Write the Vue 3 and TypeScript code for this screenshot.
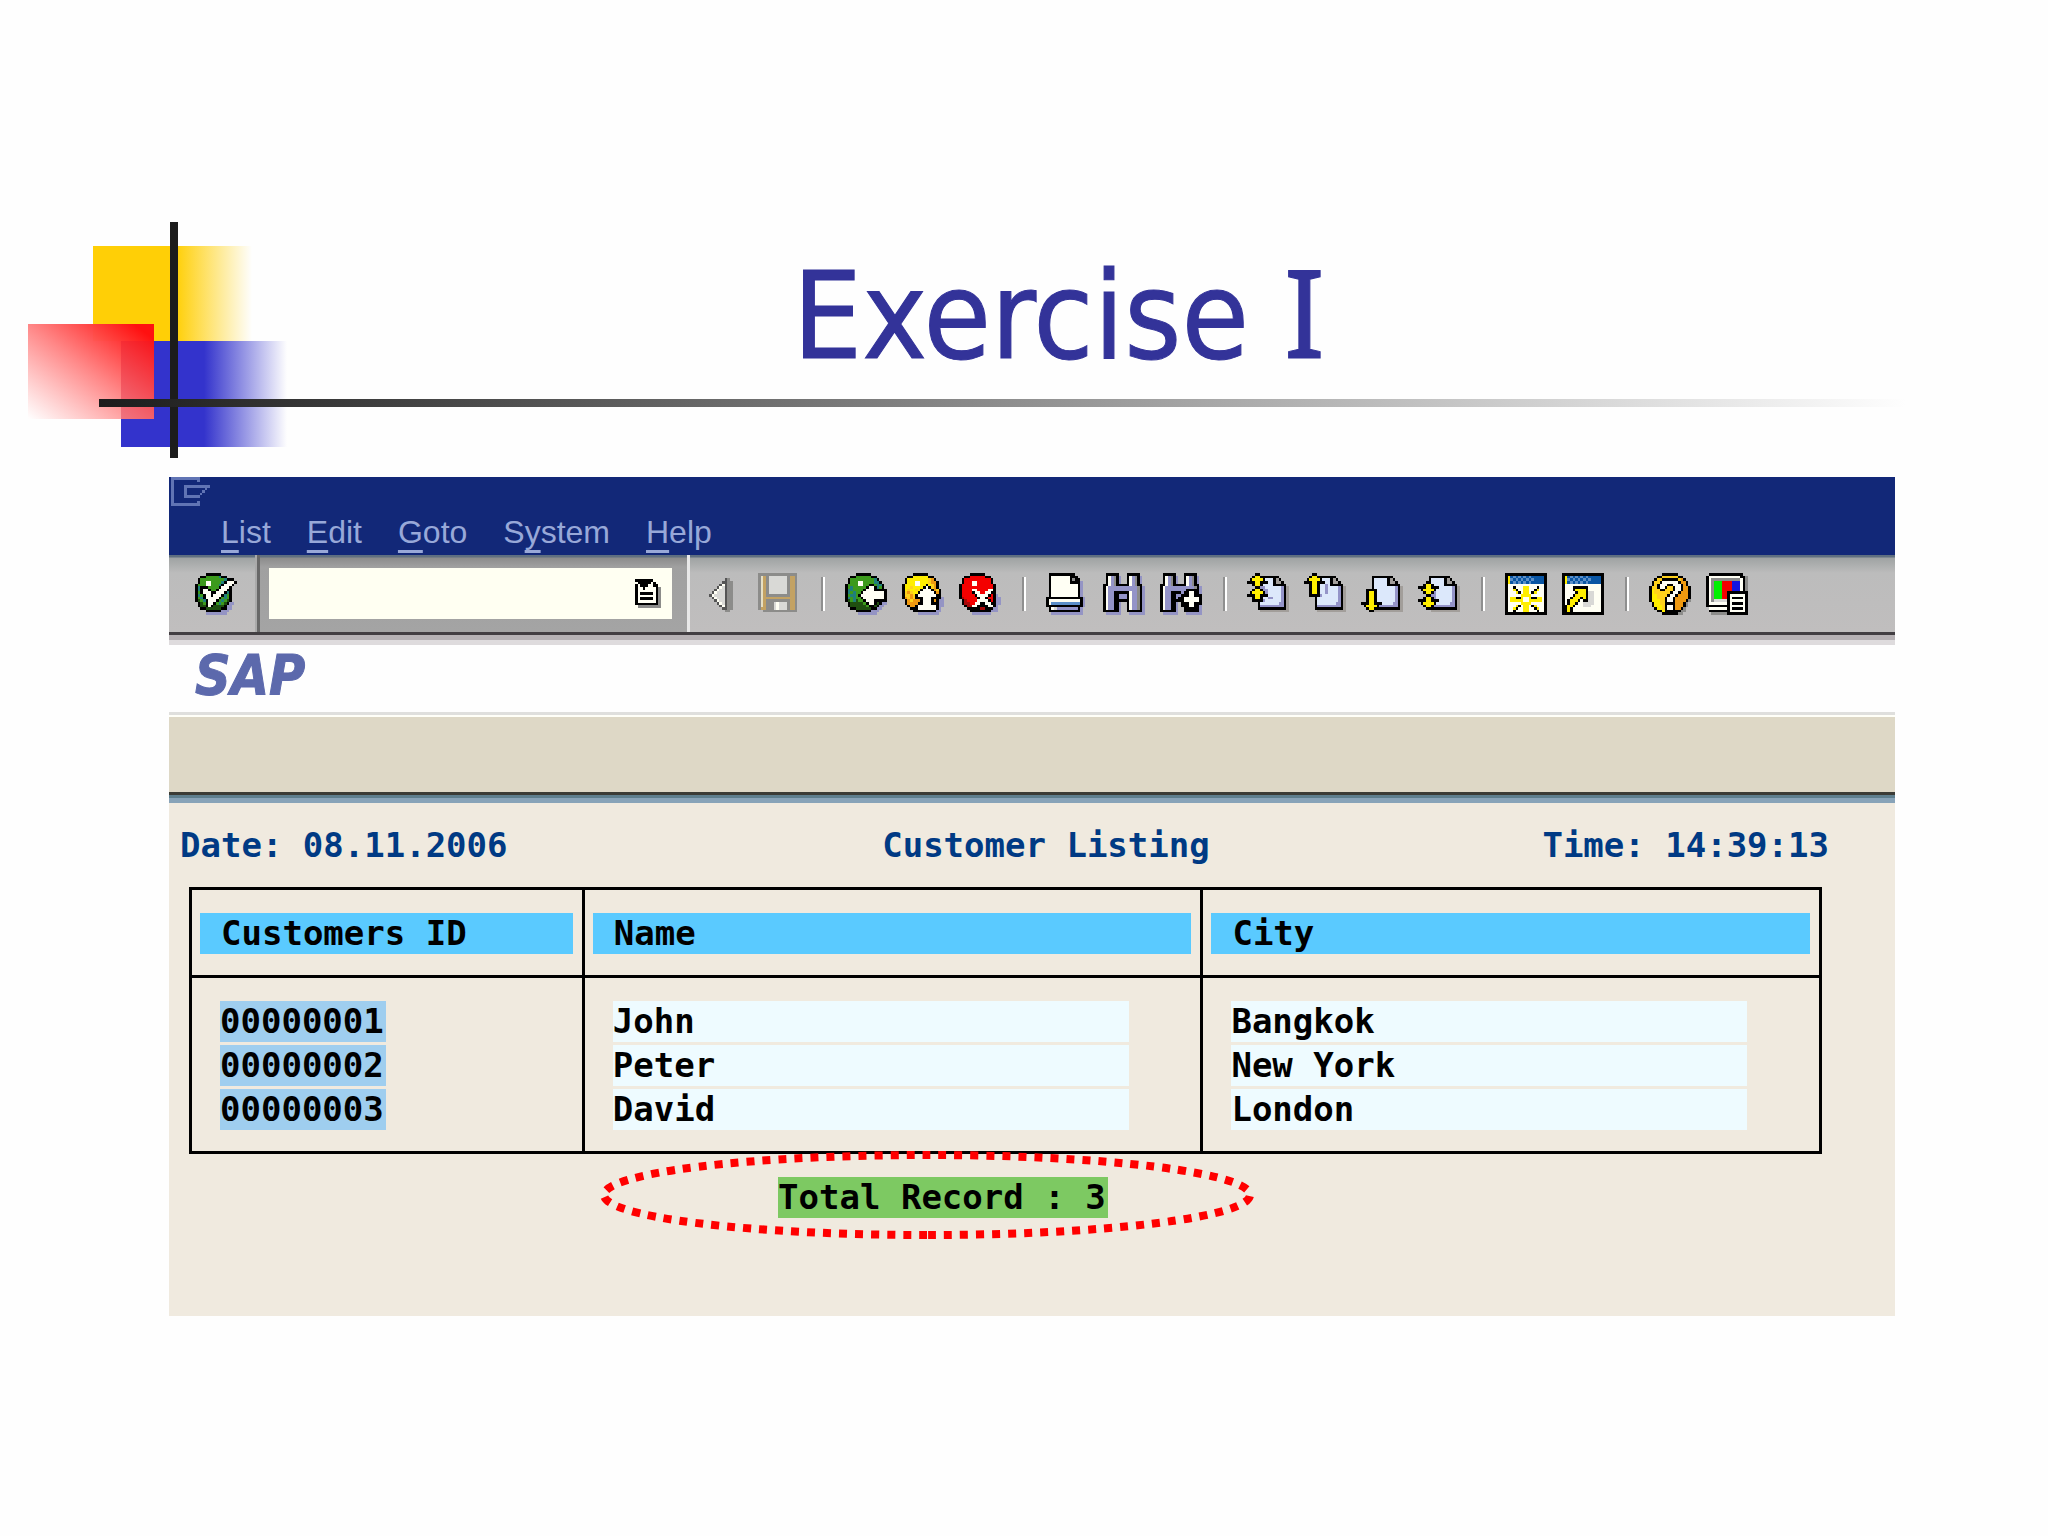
<script setup lang="ts">
interface Customer {
  id: string
  name: string
  city: string
}

interface Menu {
  before: string
  key: string
  after: string
}

interface Run {
  x: number
  y: number
  w: number
  fill: string
}

interface Sprite {
  width: number
  height: number
  runs: Run[]
}

interface Tool {
  label: string
  sprite: Sprite
}

const menus: Menu[] = [
  { before: '', key: 'L', after: 'ist' },
  { before: '', key: 'E', after: 'dit' },
  { before: '', key: 'G', after: 'oto' },
  { before: 'S', key: 'y', after: 'stem' },
  { before: '', key: 'H', after: 'elp' },
]

const customers: Customer[] = [
  { id: '00000001', name: 'John', city: 'Bangkok' },
  { id: '00000002', name: 'Peter', city: 'New York' },
  { id: '00000003', name: 'David', city: 'London' },
]

// One letter per colour; a dot is a transparent cell.
const palette: Record<string, string> = {
  k: '#000000',
  n: '#555555',
  w: '#fffff4',
  e: '#d9d9d6',
  a: '#8c8c8a',
  x: '#a29e9a',
  s: '#9494c4',
  v: '#9494c8',
  l: '#dce8fb',
  g: '#3c9a1c',
  t: '#1f7f7a',
  d: '#1f4f10',
  y: '#ffee00',
  Y: '#ffd21c',
  o: '#f09a10',
  r: '#f40000',
  R: '#a80808',
  G: '#00f000',
  b: '#0a56a4',
  B: '#5c8fc8',
  u: '#1414e0',
  c: '#e6dfc4',
  T: '#c3a263',
  p: '#6074b4',
}

// Turns rows of letters into horizontal colour runs.
function sprite(rows: string[]): Sprite {
  const runs: Run[] = []
  rows.forEach((row, y) => {
    let x = 0
    while (x < row.length) {
      const letter = row[x]
      let end = x + 1
      while (end < row.length && row[end] === letter) end++
      if (letter !== '.') runs.push({ x, y, w: end - x, fill: palette[letter] })
      x = end
    }
  })
  return { width: Math.max(...rows.map((r) => r.length)), height: rows.length, runs }
}

// Lays one set of rows over another, starting at the given row.
function overlay(base: string[], top: string[], from: number): string[] {
  return base.map((row, y) => {
    const over = top[y - from]
    if (!over) return row
    return [...row].map((c, x) => (over[x] && over[x] !== '.' ? over[x] : c)).join('')
  })
}

const enter = sprite([
  '....kkkkkk......',
  '..kkgggggtkk....',
  '.kgggggggggtkkk.',
  '.kggwwggggtkwwwk',
  'kgggwwgggtkwwwk.',
  'ktkkkggggkwwwk..',
  'ktkwwkggkwwwkk..',
  'kgkwwwkkwwwktk..',
  'ktgkwwkwwwktgk..',
  'kgtkwwwwwkgtgk..',
  'kdgtkwwwkgtgdk..',
  '.kdgkwwkgtgdkss.',
  '.kddkwkddddkss..',
  '..kkddddddkkss..',
  '....kkkkkksss...',
  '....ssssssss....',
])

const history = sprite([
  'kkkkkkk...',
  '.kkkkkwk..',
  'kwkkkwwkk.',
  'kwwkwwwwka',
  'kwwwwwwwka',
  'kwkkkkkwka',
  'kwwwwwwwka',
  'kwkkkkkwka',
  'kwwwwwwwka',
  'kkkkkkkkka',
  '.aaaaaaaaa',
])

const windowMark = sprite([
  'ppppppppppp....',
  'p.........p....',
  'p..............',
  'p....pppppppppp',
  'p....p.......p.',
  'p....p......p..',
  'p....p.....p...',
  'p....pppppp....',
  'p..............',
  'p.........p....',
  'ppppppppppp....',
])

const collapse = sprite([
  '................',
  '................',
  '.........na.....',
  '........nnaa....',
  '.......nwnaa....',
  '......nwenaa....',
  '.....nweenaa....',
  '....nweeenaa....',
  '...nweeeenaa....',
  '....nweeenaa....',
  '.....nweenaa....',
  '......nwenaa....',
  '.......nwnaa....',
  '........nnaa....',
  '.........aa.....',
  '................',
])

const save = sprite([
  'aaaaaaaaaaaaaaa.',
  'acTaeeeeeeeaTTa.',
  'acTaeeeeeeeaTTa.',
  'acTaeeeeeeeaTTa.',
  'acTaeeeeeeeaTTa.',
  'acTaeeeeeeeaTTa.',
  'acTaeeeeeeeaTTa.',
  'acTaeeeeeeeaTTa.',
  'acTaaaaaaaaaTTa.',
  'acTTTTTTTTTTTTa.',
  'acTaaaaaaaaaTTa.',
  'acTaaaeweeeaTTa.',
  'acTaaaeweeeaTTa.',
  'aTTaaaeweeeaTTa.',
  '..aaaaaaaaaaaaa.',
  '................',
])

const back = sprite([
  '....kkkkkk......',
  '..kkggggggkk....',
  '.kgggggggggtk...',
  '.kgggwwggggttk..',
  'kggggwwggkkgttk.',
  'kgtgggggkwwktgk.',
  'kttggggkwwwkkkkk',
  'ktgtggkwwwwwwwwk',
  'kgttgkwwwwwwwwwk',
  'ktgtggkwwwwwwwwk',
  'kdgtdggkwwwkkkkk',
  '.kdddddgkwwkdkss',
  '.kddddddgkkdkss.',
  '..kkddddddkkss..',
  '....kkkkkksss...',
  '.....sssssss....',
])

const exit = sprite([
  '....kkkkkk......',
  '..kkyyyyyykk....',
  '.kyyyyyyyyYok...',
  '.kyyywwyyyYook..',
  'kyyyywwyykyYok..',
  'kyyYyyyykwkYok..',
  'kyYyyYykwwwkoYk.',
  'kYoYyykwwwwwkok.',
  'kYYoYkwwwwwwwkk.',
  'koYoYkkkwwwkkkks',
  '.koYoookwwwkokss',
  '.kooookkwwwkkkss',
  '..kookwwwwwwwkss',
  '...kkkwwwwwwwks.',
  '....kkkkkkkkkss.',
  '......ssssssss..',
])

const cancel = sprite([
  '....kkkkkk......',
  '..kkrrrrrrkk....',
  '.krrrrrrrrrrk...',
  '.krrrwwrrrrrk...',
  'krrrrwwrrrrrrk..',
  'krrrrrrrrrrrrk..',
  'krrrrwwrrrrwwk..',
  'krrrrkwwrrwwkk..',
  'krrrrrkwwwwkrks.',
  'kRrrrrrkwwkrrkss',
  '.kRrrrrwwwwkrkss',
  '.kRRrrwwkkwwkkss',
  '..kRRwwkkkkwwks.',
  '...kkkkkRRkkkss.',
  '....kkkkkkkksss.',
  '.....sssssss....',
])

const print = sprite([
  '.kkkkkkkkkk.....',
  '.kwwwwwwwkkk....',
  '.kwwwwwwwkakk...',
  '.kwwwwwwwkkkks..',
  '.kwwwwwwwwwwks..',
  '.kwwwwwwwwwwks..',
  '.kwwwwwwwwwwks..',
  '.kwwwwwwwwwwks..',
  '.kwwwwwwwwwwks..',
  'kkkkkkkkkkkkkks.',
  'kwwwwwwwwwwwwks.',
  'kwBBBBBBBBBBBks.',
  'kkkkkkkkkkkkkks.',
  '.kwevvvvvvvvks..',
  '.kkkkkkkkkkkks..',
  '..ssssssssssss..',
])

const find = sprite([
  '.kkkkk...kkkkk..',
  '.kwvaks..kwvaks.',
  '.kwvaks..kwvaks.',
  '.kwvaks..kwvaks.',
  'kkwvakkkkkwvakk.',
  'kwvvvvvvvvvvvaks',
  'kwvvvvvvvvvvvaks',
  'kwvvkkkkkkwvvaks',
  'kwvvkkvvvkwvvaks',
  'kwvvkkvvvkwvvaks',
  'kwvvkkkkkkwvvaks',
  'kwvvkks..kwvvaks',
  'kwvvkks..kwvvaks',
  'kwvvkks..kwvvaks',
  'kkkkkks..kkkkkks',
  '.ssssss...ssssss',
])

const findNext = sprite([
  '.kkkkk...kkkkk..',
  '.kwvaks..kwvaks.',
  '.kwvaks..kwvaks.',
  '.kwvaks..kwvaks.',
  'kkwvakkkkkwvakk.',
  'kwvvvvvvvvvvvaks',
  'kwvvvvvvvvkkkkks',
  'kwvvkkkkvkkwwkks',
  'kwvvkkvvkkkwwkkk',
  'kwvvkkvkkwwwwwwk',
  'kwvvkkkkkwwwwwwk',
  'kwvvkks.kkkwwkkk',
  'kwvvkks.kkkwwkks',
  'kwvvkks..kkkkkks',
  'kkkkkks..kkkkkks',
  '.ssssss...ssssss',
])

const sheet = [
  '................',
  '....kkkkkkkk....',
  '....klllllkxk...',
  '....klllllkxxk..',
  '....klllllkkkkk.',
  '....kllllllllvkx',
  '....kllllllllvkx',
  '....kllllllllvkx',
  '....kllllllllvkx',
  '....kllllllllvkx',
  '....kllllllllvkx',
  '....klllllllvvkx',
  '....kvvvvvvvvvkx',
  '....kkkkkkkkkkkx',
  '.....xxxxxxxxxxx',
  '................',
]

const upHead = ['...kk...', '..kyyk..', '.kyyyyk.', 'kkkyykkk']
const downHead = ['kkkyykkk', '.kyyyyk.', '..kyyk..', '...kk...']
const shaft = '..kyyk..'

const firstPage = sprite(overlay(sheet, [...upHead, shaft, '...kkvv.', '..kyykvv', '.kyyyykv', 'kkkyykkk', shaft + 'vv', '..kkkkv.'], 0))
const previousPage = sprite(overlay(sheet, [...upHead, shaft + 'v', shaft + 'v', shaft + 'v', shaft + 'v', '..kkkkv.'], 0))
const nextPage = sprite(overlay(sheet, ['..kkkk..', shaft, shaft, shaft, shaft, ...downHead], 6))
const lastPage = sprite(overlay(sheet, ['...kk...', shaft, ...downHead.slice(0, 2), '..kyykv.', '...kkvv.', '..kyykv.', ...downHead], 3))

const newSession = sprite([
  'kkkkkkkkkkkkkkkk',
  'kybBbBbBbBbbbbbk',
  'kyBbBbBbBbBbbbbk',
  'kybBbBbBbBbbbbbk',
  'kwwwwwwwwwwwwwwk',
  'kwwkwwwyywwwkwwk',
  'kwwykwwyywwkywwk',
  'kwwwykwyywkywwwk',
  'kwwwwwyyyywwwwwk',
  'kwyykkywwykkyywk',
  'kwyyyyywwyyyyywk',
  'kwwwwwyyyywwwwwk',
  'kwwwykwyywkywwwk',
  'kwwykwwyywwkywwk',
  'kwwkwwwyywwwkwwk',
  'kkkkkkkkkkkkkkkk',
])

const shortcut = sprite([
  'kkkkkkkkkkkkkkkk',
  'kybBbBbBbBbbbbbk',
  'kyBbBbBbBbBbbbbk',
  'kybBbBbBbBbbbbbk',
  'kwwwwwwwwwwwwwwk',
  'kwwwkkkkkkwwwwwk',
  'kwwwkyyyykwwwwwk',
  'kwwwwkyyykeewwwk',
  'kwwwkyyyykeewwwk',
  'kwwkyyykykeewwwk',
  'kwkyyykwkkeewwwk',
  'kwkyykwweeeewwwk',
  'kkyykwwweeewwwwk',
  'kkykwwwwwwwwwwwk',
  'kkykwwwwwwwwwwwk',
  'kkkkkkkkkkkkkkkk',
])

const help = sprite([
  '.....kkkkkk.....',
  '...kkYYYYYYkk...',
  '..kYYkkkkkkYok..',
  '.kYYkwwwwwwkook.',
  '.kYkwwwkkwwwkok.',
  'kYYkwwkYYkwwkook',
  'kyYYkkYYYkwwkook',
  'kyYYYYYYkwwkoook',
  'kyyYYYYkwwkooook',
  'kyyYYYkwwkoooook',
  'kyyyYYkwwkooooka',
  '.kyyYYkkkkoooka.',
  '.kyyyYkwwkoooka.',
  '..kyyYkwwkooka..',
  '...kkykkkkkkaa..',
  '.....kkkkkkaa...',
])

const customize = sprite([
  '.kkkkkkkkkkkkk..',
  'kwwwwwwwwwwwwkka',
  'kwaaaaaaaaaaawka',
  'kwaGGGrrrruuuwka',
  'kwaGGGrrrruuuwka',
  'kwaGGGrrrruuuwka',
  'kwaGGGrrrruuuwka',
  'kwaGGGrrkkkkkkkk',
  'kwaGGGrrkwwwwwwk',
  'kwaGGGrrkwkkkkwk',
  'kwaeeeeekwwwwwwk',
  'kwwwwwwwkwkkkkwk',
  'kkkkkkkkkwwwwwwk',
  '.wwwwwwwkwkkkkwk',
  '.kkkkkkkkwwwwwwk',
  '..aaaaaakkkkkkkk',
])

const toolGroups: Tool[][] = [
  [
    { label: 'Collapse', sprite: collapse },
    { label: 'Save', sprite: save },
  ],
  [
    { label: 'Back', sprite: back },
    { label: 'Exit', sprite: exit },
    { label: 'Cancel', sprite: cancel },
  ],
  [
    { label: 'Print', sprite: print },
    { label: 'Find', sprite: find },
    { label: 'Find next', sprite: findNext },
  ],
  [
    { label: 'First page', sprite: firstPage },
    { label: 'Previous page', sprite: previousPage },
    { label: 'Next page', sprite: nextPage },
    { label: 'Last page', sprite: lastPage },
  ],
  [
    { label: 'New session', sprite: newSession },
    { label: 'Create shortcut', sprite: shortcut },
  ],
  [
    { label: 'Help', sprite: help },
    { label: 'Customize layout', sprite: customize },
  ],
]
</script>

<template>
  <main class="slide">
    <header class="slide-header">
      <svg class="ornament" viewBox="0 0 264 236" aria-hidden="true">
        <defs>
          <linearGradient id="fade-yellow">
            <stop offset="0.52" stop-color="#ffcf06" />
            <stop offset="1" stop-color="#ffcf06" stop-opacity="0" />
          </linearGradient>
          <linearGradient id="fade-blue">
            <stop offset="0.5" stop-color="#3333cc" />
            <stop offset="1" stop-color="#3333cc" stop-opacity="0" />
          </linearGradient>
          <linearGradient id="fade-red" x1="1" y1="0" x2="0" y2="1">
            <stop offset="0.08" stop-color="#ff1010" />
            <stop offset="0.5" stop-color="#ff8282" stop-opacity="0.96" />
            <stop offset="1" stop-color="#ffffff" stop-opacity="0.9" />
          </linearGradient>
        </defs>
        <rect x="65" y="24" width="159" height="95" fill="url(#fade-yellow)" />
        <rect x="93" y="119" width="166" height="106" fill="url(#fade-blue)" />
        <rect x="0" y="102" width="126" height="95" fill="url(#fade-red)" />
        <rect x="93" y="119" width="33" height="78" fill="#e81c30" fill-opacity="0.3" />
        <rect x="142" y="0" width="8" height="236" fill="#1c1c1c" />
      </svg>
      <h1 class="slide-title">Exercise <span class="numeral">I</span></h1>
      <div class="rule"></div>
    </header>

    <section class="window">
      <div class="title-bar">
        <svg class="window-mark" viewBox="0 0 15 11" shape-rendering="crispEdges" aria-hidden="true">
          <rect v-for="(r, i) in windowMark.runs" :key="i" :x="r.x" :y="r.y" :width="r.w" height="1" :fill="r.fill" />
        </svg>
        <nav class="menu-bar">
          <button v-for="m in menus" :key="m.key" type="button" class="menu">{{ m.before }}<span class="access-key">{{ m.key }}</span>{{ m.after }}</button>
        </nav>
      </div>

      <div class="toolbar">
        <div class="enter-cell">
          <button type="button" class="tool" aria-label="Enter">
            <svg class="tool-icon" viewBox="0 0 16 16" shape-rendering="crispEdges">
              <rect v-for="(r, i) in enter.runs" :key="i" :x="r.x" :y="r.y" :width="r.w" height="1" :fill="r.fill" />
            </svg>
          </button>
        </div>
        <div class="command-cell">
          <div class="command-field">
            <input class="command-input" type="text" aria-label="Command" />
            <button type="button" class="history" aria-label="Command history">
              <svg class="history-icon" viewBox="0 0 10 11" shape-rendering="crispEdges">
                <rect v-for="(r, i) in history.runs" :key="i" :x="r.x" :y="r.y" :width="r.w" height="1" :fill="r.fill" />
              </svg>
            </button>
          </div>
        </div>
        <div class="tools">
          <template v-for="(group, g) in toolGroups" :key="g">
            <span v-if="g > 0" class="separator"></span>
            <button v-for="tool in group" :key="tool.label" type="button" class="tool" :aria-label="tool.label">
              <svg class="tool-icon" viewBox="0 0 16 16" shape-rendering="crispEdges">
                <rect v-for="(r, i) in tool.sprite.runs" :key="i" :x="r.x" :y="r.y" :width="r.w" height="1" :fill="r.fill" />
              </svg>
            </button>
          </template>
        </div>
      </div>
      <div class="toolbar-shadow"></div>

      <div class="brand">SAP</div>
      <div class="application-bar"></div>

      <div class="report">
        <div class="report-heading">
          <span>Date: 08.11.2006</span>
          <h2 class="report-title">Customer Listing</h2>
          <span>Time: 14:39:13</span>
        </div>

        <table class="listing">
          <colgroup>
            <col class="col-id" />
            <col />
            <col />
          </colgroup>
          <thead>
            <tr>
              <th scope="col"><div class="head-bar">Customers ID</div></th>
              <th scope="col"><div class="head-bar">Name</div></th>
              <th scope="col"><div class="head-bar">City</div></th>
            </tr>
          </thead>
          <tbody>
            <tr v-for="c in customers" :key="c.id">
              <td><div class="value key-value">{{ c.id }}</div></td>
              <td><div class="value">{{ c.name }}</div></td>
              <td><div class="value">{{ c.city }}</div></td>
            </tr>
          </tbody>
        </table>

        <div class="summary">
          <div class="total">
            Total Record : 3
            <svg class="callout" viewBox="0 0 654 88" aria-hidden="true">
              <path
                d="M327 84 A323 40 0 0 1 327 4 A323 40 0 0 1 327 84"
                fill="none"
                stroke="#ff0000"
                stroke-width="8"
                stroke-dasharray="8 8"
              />
            </svg>
          </div>
        </div>
      </div>
    </section>
  </main>
</template>

<style>
body {
  margin: 0;
  background: #fefefe;
}
</style>

<style scoped>
.slide {
  padding-bottom: 80px;
}

.slide-header {
  position: relative;
  padding-top: 241px;
}

.ornament {
  position: absolute;
  left: 28px;
  top: 222px;
  width: 264px;
  height: 236px;
}

.slide-title {
  margin: 0;
  padding-left: 70px;
  color: #333399;
  font: 400 122px/150px 'DejaVu Sans Condensed', 'DejaVu Sans', sans-serif;
  text-align: center;
  -webkit-text-stroke: 1px #333399;
}

.numeral {
  font-family: 'Noto Sans', sans-serif;
  line-height: 1;
}

.rule {
  position: relative;
  height: 8px;
  margin: 8px 142px 0 99px;
  background: linear-gradient(to right, #1c1c1c, #fefefe);
}

.window {
  margin: 70px 153px 0 169px;
  background: #f0eadf;
}

.title-bar {
  height: 78px;
  background: #122878;
}

.window-mark {
  display: block;
  width: 39px;
  height: 29px;
  margin-left: 2px;
}

.menu-bar {
  display: flex;
  gap: 36px;
  padding: 3px 0 0 52px;
}

.menu {
  padding: 0;
  border: 0;
  background: none;
  color: #98a8d8;
  font: 32px/46px 'Liberation Sans', Arial, sans-serif;
}

.access-key {
  text-decoration: underline;
  text-decoration-thickness: 3px;
  text-decoration-skip-ink: none;
  text-underline-offset: 7px;
}

.toolbar {
  display: flex;
  height: 77px;
  border-bottom: 3px solid #423e42;
  background: linear-gradient(to bottom, #5f6f80 0, #5f6f80 2px, #9fa3a3 3px, #bcbcbc 18px, #c0bebe 100%);
}

.enter-cell {
  display: flex;
  align-items: center;
  width: 88px;
  padding-left: 26px;
  box-sizing: border-box;
  border-right: 2px solid #aaaaaa;
}

.command-cell {
  display: flex;
  align-items: center;
  padding: 0 15px 0 9px;
  border-left: 3px solid #686868;
  border-right: 3px solid #e8e8e8;
  background: linear-gradient(to bottom, #5f6f80 0, #5f6f80 2px, #8c8c8c 3px, #a0a0a0 12px, #a4a4a4 100%);
}

.command-field {
  display: flex;
  align-items: center;
  width: 403px;
  height: 51px;
  background: #fffff2;
}

.command-input {
  flex: 1;
  min-width: 0;
  height: 100%;
  padding: 0 8px;
  border: 0;
  background: transparent;
  font: 32px 'Liberation Sans', Arial, sans-serif;
}

.history {
  padding: 0;
  margin-right: 11px;
  border: 0;
  background: none;
}

.history-icon {
  display: block;
  width: 26px;
  height: 29px;
}

.tools {
  display: flex;
  align-items: center;
  gap: 15px;
  padding-left: 11px;
}

.tool {
  padding: 0;
  border: 0;
  background: none;
}

.tool-icon {
  display: block;
  width: 42px;
  height: 42px;
}

.separator {
  width: 15px;
  height: 34px;
  background: linear-gradient(to right, #8f8f8f 50%, #ffffff 50%) center / 4px 100% no-repeat;
}

.toolbar-shadow {
  height: 10px;
  background: linear-gradient(to bottom, #b6b1b4 50%, #dedbdd 50%);
}

.brand {
  height: 67px;
  padding-left: 26px;
  border-bottom: 3px solid #dfdfdd;
  background: #fefefe;
  color: #5c69ac;
  font: italic 700 55px/60px 'DejaVu Sans Condensed', 'DejaVu Sans', sans-serif;
  -webkit-text-stroke: 1px #5c69ac;
}

.application-bar {
  height: 75px;
  border-top: 2px solid #fffff8;
  border-bottom: 3px solid #3c3c36;
  background: #ded8c6;
}

.report {
  padding: 28px 0 98px;
  background: linear-gradient(to bottom, #5f7f8e 3px, #88a3b8 3px, #88a3b8 8px, #f0eadf 8px);
  color: #000000;
  font: 700 34px/41px 'DejaVu Sans Mono', monospace;
}

.report-heading {
  display: grid;
  grid-template-columns: auto 1fr auto;
  padding: 0 66px 0 11px;
  color: #003a84;
  line-height: 44px;
  white-space: pre;
}

.report-title {
  margin: 0;
  padding-left: 42px;
  font: inherit;
  text-align: center;
}

.listing {
  width: calc(100% - 93px);
  margin: 20px 0 0 20px;
  border-collapse: collapse;
  table-layout: fixed;
}

.col-id {
  width: 24.1%;
}

.listing th,
.listing td {
  border: 0 solid #000000;
  border-width: 0 3px;
  text-align: left;
  white-space: pre;
}

.listing th {
  padding: 23px 9px 21px 8px;
  border-width: 3px;
  font-weight: 700;
}

.listing td {
  padding: 0 28px 3px;
}

.listing tbody tr:first-child td {
  padding-top: 23px;
}

.listing tbody tr:last-child td {
  padding-bottom: 21px;
  border-bottom-width: 3px;
}

.head-bar {
  padding-left: 21px;
  background: #5acaff;
}

.value {
  max-width: 516px;
  background: #eefbff;
}

.key-value {
  width: 166px;
  background: #9fceef;
}

.summary {
  display: flex;
  padding: 23px 0 0 35%;
}

.total {
  position: relative;
  width: 330px;
  margin-left: 5px;
  background: #7dc962;
  white-space: nowrap;
}

.callout {
  position: absolute;
  left: -178px;
  top: -26px;
  width: 654px;
  height: 88px;
}
</style>
